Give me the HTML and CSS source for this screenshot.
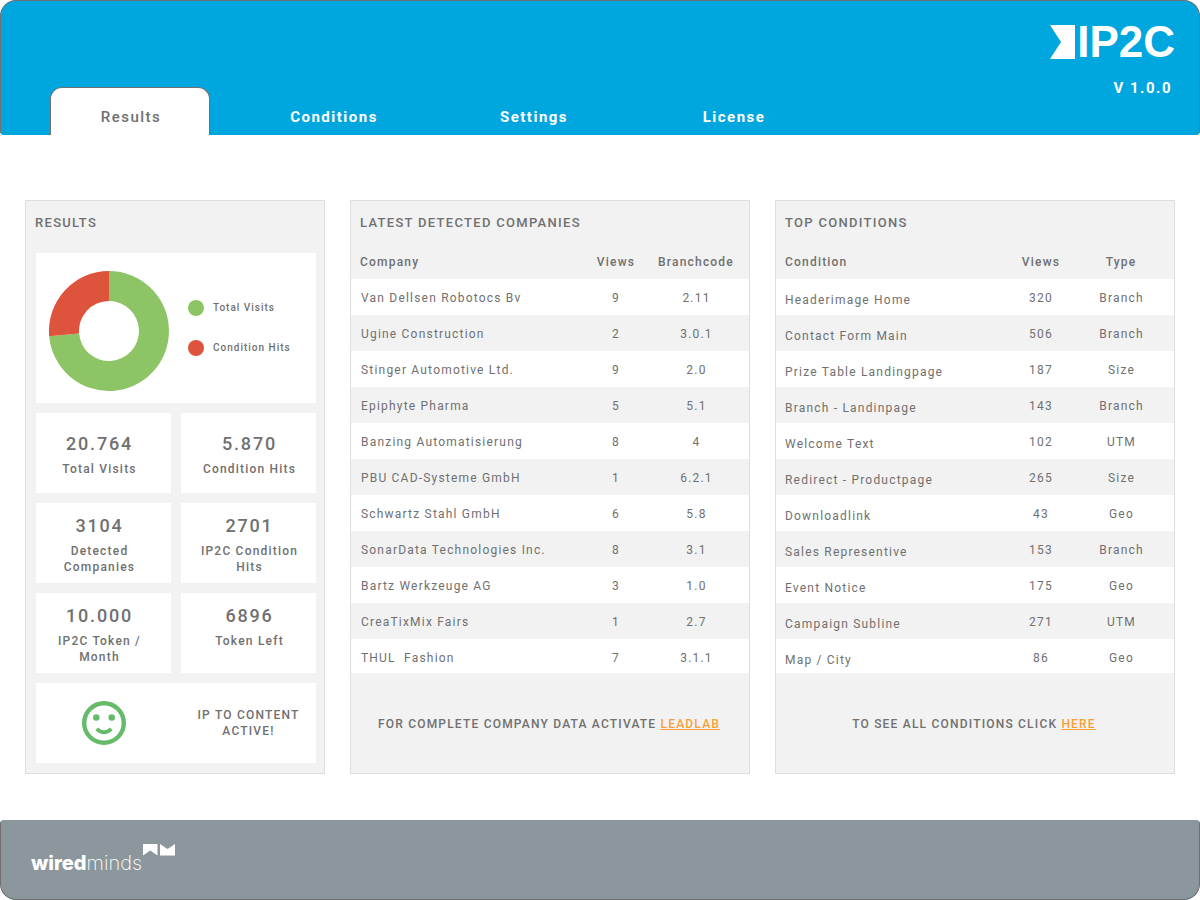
FILE: index.html
```html
<!DOCTYPE html>
<html lang="en">
<head>
    <meta charset="utf-8">
    <title>IP2C - Results</title>
    <link rel="stylesheet" href="styles.css">
</head>
<body>
    <header class="header">
        <nav class="tabs">
            <a href="#results" class="tab active">Results</a>
            <a href="#conditions" class="tab">Conditions</a>
            <a href="#settings" class="tab">Settings</a>
            <a href="#license" class="tab">License</a>
        </nav>
        <div class="brand">
            <div class="logo">
                <svg width="25" height="34" viewBox="0 0 25 34"><path d="M0 0H25V34H0L11 17Z" fill="#fff"/></svg>
                <div class="logo-text">IP2C</div>
            </div>
            <div class="version">V 1.0.0</div>
        </div>
    </header>

    <main class="content">
        <section class="panel" id="results">
            <h2>RESULTS</h2>
            <div class="cards">
                <div class="card chart">
                    <svg width="120" height="120" viewBox="-60 -60 120 120">
                        <path d="M0 -60A60 60 0 1 1 -59.8 5.2L-29.9 2.6A30 30 0 1 0 0 -30Z" fill="#8dc466"/>
                        <path d="M0 -60A60 60 0 0 0 -59.8 5.2L-29.9 2.6A30 30 0 0 1 0 -30Z" fill="#de533c"/>
                    </svg>
                    <ul class="legend">
                        <li><span class="dot green"></span>Total Visits</li>
                        <li><span class="dot red"></span>Condition Hits</li>
                    </ul>
                </div>
                <div class="card stat left">
                    <div class="value">20.764</div>
                    <div class="label">Total Visits</div>
                </div>
                <div class="card stat">
                    <div class="value">5.870</div>
                    <div class="label">Condition Hits</div>
                </div>
                <div class="card stat left">
                    <div class="value">3104</div>
                    <div class="label">Detected<br>Companies</div>
                </div>
                <div class="card stat">
                    <div class="value">2701</div>
                    <div class="label">IP2C Condition<br>Hits</div>
                </div>
                <div class="card stat left">
                    <div class="value">10.000</div>
                    <div class="label">IP2C Token /<br>Month</div>
                </div>
                <div class="card stat top">
                    <div class="value">6896</div>
                    <div class="label">Token Left</div>
                </div>
                <div class="card status">
                    <svg width="44" height="44" viewBox="0 0 44 44">
                        <circle cx="22" cy="22" r="19.8" fill="none" stroke="#66bb6a" stroke-width="4.4"/>
                        <circle cx="14.3" cy="16.5" r="3.3" fill="#66bb6a"/>
                        <circle cx="29.7" cy="16.5" r="3.3" fill="#66bb6a"/>
                        <path d="M14.600 27.800Q22 34.800 29.400 27.800" fill="none" stroke="#66bb6a" stroke-width="3.8"/>
                    </svg>
                    <div class="label">IP TO CONTENT<br>ACTIVE!</div>
                </div>
            </div>
        </section>

        <section class="panel">
            <h2>LATEST DETECTED COMPANIES</h2>
            <table class="companies">
                <thead>
                    <tr><th>Company</th><th class="num">Views</th><th class="last">Branchcode</th></tr>
                </thead>
                <tbody>
                    <tr><td>Van Dellsen Robotocs Bv</td><td>9</td><td>2.11</td></tr>
                    <tr><td>Ugine Construction</td><td>2</td><td>3.0.1</td></tr>
                    <tr><td>Stinger Automotive Ltd.</td><td>9</td><td>2.0</td></tr>
                    <tr><td>Epiphyte Pharma</td><td>5</td><td>5.1</td></tr>
                    <tr><td>Banzing Automatisierung</td><td>8</td><td>4</td></tr>
                    <tr><td>PBU CAD-Systeme GmbH</td><td>1</td><td>6.2.1</td></tr>
                    <tr><td>Schwartz Stahl GmbH</td><td>6</td><td>5.8</td></tr>
                    <tr><td>SonarData Technologies Inc.</td><td>8</td><td>3.1</td></tr>
                    <tr><td>Bartz Werkzeuge AG</td><td>3</td><td>1.0</td></tr>
                    <tr><td>CreaTixMix Fairs</td><td>1</td><td>2.7</td></tr>
                    <tr><td>THUL&nbsp; Fashion</td><td>7</td><td>3.1.1</td></tr>
                </tbody>
            </table>
            <p class="note">FOR COMPLETE COMPANY DATA ACTIVATE <a href="#leadlab">LEADLAB</a></p>
        </section>

        <section class="panel" id="conditions">
            <h2>TOP CONDITIONS</h2>
            <table class="conditions">
                <thead>
                    <tr><th>Condition</th><th class="num">Views</th><th class="last">Type</th></tr>
                </thead>
                <tbody>
                    <tr><td>Headerimage Home</td><td>320</td><td>Branch</td></tr>
                    <tr><td>Contact Form Main</td><td>506</td><td>Branch</td></tr>
                    <tr><td>Prize Table Landingpage</td><td>187</td><td>Size</td></tr>
                    <tr><td>Branch - Landinpage</td><td>143</td><td>Branch</td></tr>
                    <tr><td>Welcome Text</td><td>102</td><td>UTM</td></tr>
                    <tr><td>Redirect - Productpage</td><td>265</td><td>Size</td></tr>
                    <tr><td>Downloadlink</td><td>43</td><td>Geo</td></tr>
                    <tr><td>Sales Representive</td><td>153</td><td>Branch</td></tr>
                    <tr><td>Event Notice</td><td>175</td><td>Geo</td></tr>
                    <tr><td>Campaign Subline</td><td>271</td><td>UTM</td></tr>
                    <tr><td>Map / City</td><td>86</td><td>Geo</td></tr>
                </tbody>
            </table>
            <p class="note">TO SEE ALL CONDITIONS CLICK <a href="#all">HERE</a></p>
        </section>
    </main>

    <footer class="footer">
        <div class="wiredminds"><b>wired</b>minds</div>
        <svg width="32" height="12" viewBox="0 0 32 12">
            <path d="M0 0H14.500V11.500L7.250 6.500L0 11.500Z" fill="#fff"/>
            <path d="M17 0L24.500 5L32 0V11.500H17Z" fill="#fff"/>
        </svg>
    </footer>
</body>
</html>
```
FILE: styles.css
```css
* {
    box-sizing: border-box;
    letter-spacing: 0.1em;
}

body {
    display: flex;
    flex-direction: column;
    min-height: 100vh;
    margin: 0;
    font-family: Roboto, sans-serif;
    font-size: 12px;
    line-height: 16px;
    color: #707070;
    background-color: #fff;
}

/* header */

.header {
    display: flex;
    justify-content: space-between;
    height: 135px;
    border: 1px solid #707070;
    border-bottom: none;
    border-radius: 16px 16px 4px 4px;
    background-color: #00a6de;
}

.tabs {
    display: flex;
    align-items: flex-end;
    gap: 40px;
    padding-left: 49px;
}

.tab {
    width: 160px;
    height: 48px;
    padding-top: 20px;
    font-size: 15px;
    line-height: 20px;
    font-weight: 700;
    text-align: center;
    text-decoration: none;
    color: #fff;
}

.tab.active {
    margin-right: 4px;
    padding: 19px 0 0 2px;
    border: 1px solid #707070;
    border-bottom: none;
    border-radius: 12px 12px 0 0;
    background-color: #fff;
    font-weight: 500;
    color: #707070;
}

.brand {
    padding: 24px 24px 0 0;
    color: #fff;
}

.logo {
    display: flex;
    align-items: center;
    gap: 2px;
    height: 34px;
}

.logo-text {
    font-family: "Liberation Sans", Arial, sans-serif;
    font-size: 44px;
    line-height: 34px;
    font-weight: 700;
    letter-spacing: normal;
}

.version {
    margin-top: 19px;
    padding-right: 3px;
    font-size: 15px;
    line-height: 20px;
    font-weight: 700;
    text-align: right;
}

/* panels */

.content {
    display: grid;
    grid-template-columns: 3fr 4fr 4fr;
    gap: 25px;
    flex: 1;
    margin: 65px 25px 46px;
}

.panel {
    border: 1px solid #dedede;
    background-color: #f2f2f2;
}

.panel h2 {
    margin: 0;
    padding: 14px 9px 0;
    font-size: 13px;
    line-height: 16px;
    font-weight: 500;
}

.cards {
    display: grid;
    grid-template-columns: 1fr 1fr;
    gap: 10px;
    margin: 22px 8px 10px 10px;
}

.card {
    height: 80px;
    background-color: #fff;
}

.chart {
    display: flex;
    align-items: center;
    grid-column: span 2;
    height: 150px;
    padding: 6px 0 0 13px;
}

.legend {
    margin: 0 0 6px 19px;
    padding: 0;
    list-style: none;
    font-size: 10px;
    font-weight: 500;
}

.legend li {
    display: flex;
    align-items: center;
    gap: 9px;
}

.legend li + li {
    margin-top: 24px;
}

.dot {
    width: 16px;
    height: 16px;
    border-radius: 50%;
}

.green {
    background-color: #8dc466;
}

.red {
    background-color: #de533c;
}

.stat {
    display: flex;
    flex-direction: column;
    justify-content: center;
    gap: 5px;
    padding: 2px 0 0 2px;
    text-align: center;
}

.left {
    padding-right: 10px;
}

.top {
    justify-content: flex-start;
    padding-top: 11px;
}

.value {
    font-size: 18px;
    line-height: 24px;
    font-weight: 500;
}

.label {
    font-weight: 500;
}

.status {
    display: grid;
    grid-template-columns: 1fr 1fr;
    grid-column: span 2;
    gap: 10px;
    align-items: center;
    justify-items: center;
    text-align: center;
}

/* tables */

table {
    width: 100%;
    border-collapse: collapse;
    table-layout: fixed;
}

th {
    padding: 23px 0 9px;
    font-weight: 500;
    text-align: center;
}

th:first-child {
    padding-left: 9px;
    text-align: left;
}

.num {
    width: 80px;
}

.last {
    width: 93px;
}

.last,
td:last-child {
    padding-right: 13px;
}

td {
    height: 36px;
    padding-top: 2px;
    padding-bottom: 0;
    text-align: center;
}

td:first-child {
    padding-left: 10px;
    text-align: left;
}

.conditions td:first-child {
    padding-top: 6px;
    padding-left: 9px;
}

tbody tr:nth-child(odd) {
    background-color: #fff;
}

tbody tr:last-child td {
    height: 34px;
    padding-top: 4px;
}

.conditions tbody tr:last-child td:first-child {
    padding-top: 8px;
}

.note {
    margin: 0;
    padding: 43px 12px 41px 10px;
    font-weight: 500;
    text-align: center;
}

.note a {
    color: #f8a035;
}

/* footer */

.footer {
    display: flex;
    align-items: flex-start;
    gap: 1px;
    height: 80px;
    padding: 23px 30px 0;
    border: 1px solid #707070;
    border-top-color: #8b979c;
    border-radius: 4px 4px 16px 16px;
    background-color: #8b979c;
}

.wiredminds {
    padding-top: 7px;
    font-family: Inter, sans-serif;
    font-size: 20px;
    line-height: 24px;
    font-weight: 200;
    letter-spacing: normal;
    color: #fff;
}

.wiredminds b {
    font-weight: 800;
    letter-spacing: normal;
}
```
